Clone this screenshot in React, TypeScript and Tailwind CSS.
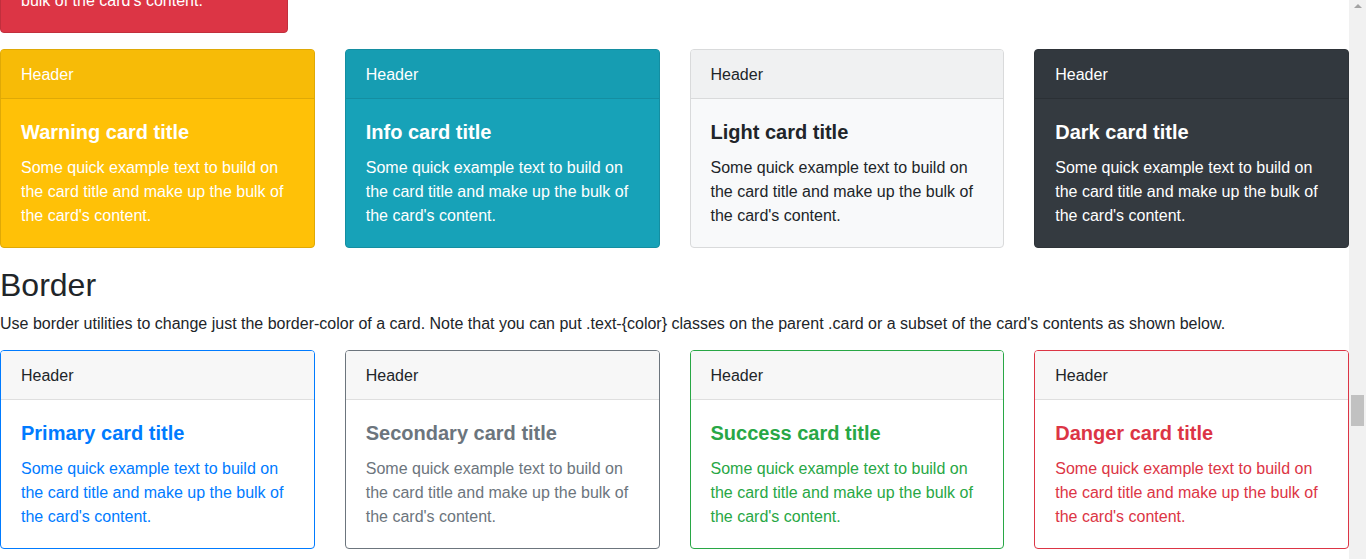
const body = "Some quick example text to build on the card title and make up the bulk of the card's content."

type CardProps = {
  title: string
  card: string
  header: string
  title_: string
  text: string
  className?: string
}

function Card({ title, card, header, title_, text, className = '' }: CardProps) {
  return (
    <div className={`flex flex-col rounded-[4px] border ${card} ${className}`}>
      <div className={`rounded-t-[3px] border-b px-5 pt-[13px] pb-[11px] leading-6 ${header}`}>Header</div>
      <div className="px-5 pt-[21px] pb-[19px]">
        <h5 className={`mb-3 text-[20px] leading-[1.2] font-semibold ${title_}`}>{title}</h5>
        <p className={`leading-6 ${text}`}>{body}</p>
      </div>
    </div>
  )
}

const filled = [
  {
    title: 'Warning card title',
    card: 'bg-[#ffc107] border-[#dfa906] text-white',
    header: 'bg-[#f7bb07] border-[#dfa906]',
    title_: '',
    text: '',
  },
  {
    title: 'Info card title',
    card: 'bg-[#17a2b8] border-[#148ea1] text-white',
    header: 'bg-[#169db2] border-[#148ea1]',
    title_: '',
    text: '',
  },
  {
    title: 'Light card title',
    card: 'bg-[#f8f9fa] border-[#d9dadb] text-[#212529]',
    header: 'bg-[#f0f1f2] border-[#d9dadb]',
    title_: '',
    text: '',
  },
  {
    title: 'Dark card title',
    card: 'bg-[#343a40] border-[#2e3338] text-white',
    header: 'bg-[#32383e] border-[#2b3035]',
    title_: '',
    text: '',
  },
]

const bordered = [
  {
    title: 'Primary card title',
    card: 'border-[#007bff] text-[#212529]',
    header: 'bg-[#f7f7f7] border-[#dfdfdf]',
    title_: 'text-[#007bff]',
    text: 'text-[#007bff]',
  },
  {
    title: 'Secondary card title',
    card: 'border-[#6c757d] text-[#212529]',
    header: 'bg-[#f7f7f7] border-[#dfdfdf]',
    title_: 'text-[#6c757d]',
    text: 'text-[#6c757d]',
  },
  {
    title: 'Success card title',
    card: 'border-[#28a745] text-[#212529]',
    header: 'bg-[#f7f7f7] border-[#dfdfdf]',
    title_: 'text-[#28a745]',
    text: 'text-[#28a745]',
  },
  {
    title: 'Danger card title',
    card: 'border-[#dc3545] text-[#212529]',
    header: 'bg-[#f7f7f7] border-[#dfdfdf]',
    title_: 'text-[#dc3545]',
    text: 'text-[#dc3545]',
  },
]

export default function App() {
  return (
    <div className="flex h-[559px] w-[1366px] overflow-hidden bg-white font-['Liberation_Sans',Arial,sans-serif] text-[16px] text-[#212529]">
      <main className="flex w-[1349px] flex-col">
        {/* tail of the previous section */}
        <div className="mt-[-166px] mb-4">
          <Card
            title="Danger card title"
            card="w-[288px] bg-[#dc3545] border-[#c12f3d] text-white"
            header="bg-[#d53342] border-[#c12f3d]"
            title_=""
            text=""
          />
        </div>

        <div className="mb-4 grid grid-cols-4 gap-[30px]">
          {filled.map((c) => (
            <Card key={c.title} {...c} />
          ))}
        </div>

        <h2 className="mb-2 pt-[2px] text-[32px] leading-[1.2] font-medium">Border</h2>
        <p className="mb-[14px] leading-6">
          Use border utilities to change just the border-color of a card. Note that you can put .text-{'{color}'} classes on the
          parent .card or a subset of the card's contents as shown below.
        </p>

        <div className="grid grid-cols-4 gap-[30px]">
          {bordered.map((c) => (
            <Card key={c.title} {...c} />
          ))}
        </div>
      </main>

      {/* scrollbar */}
      <div className="flex w-[17px] flex-col items-center bg-[#f1f1f1]">
        <div className="mt-[4px] h-0 w-0 border-x-[4px] border-b-[4px] border-x-transparent border-b-[#a3a3a3]" />
        <div className="mt-[387px] h-[31px] w-[13px] bg-[#c1c1c1]" />
      </div>
    </div>
  )
}
